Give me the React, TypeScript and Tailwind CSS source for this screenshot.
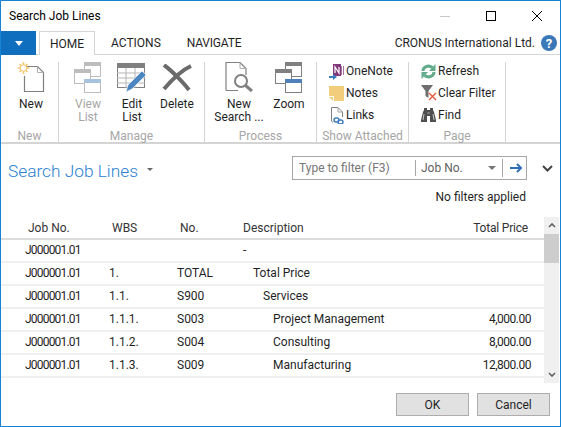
import type { ReactNode } from "react"

const rows = [
  { job: "J000001.01", wbs: "", no: "", desc: "-", indent: "pl-0", price: "" },
  { job: "J000001.01", wbs: "1.", no: "TOTAL", desc: "Total Price", indent: "pl-[10px]", price: "" },
  { job: "J000001.01", wbs: "1.1.", no: "S900", desc: "Services", indent: "pl-[20px]", price: "" },
  { job: "J000001.01", wbs: "1.1.1.", no: "S003", desc: "Project Management", indent: "pl-[30px]", price: "4,000.00" },
  { job: "J000001.01", wbs: "1.1.2.", no: "S004", desc: "Consulting", indent: "pl-[30px]", price: "8,000.00" },
  { job: "J000001.01", wbs: "1.1.3.", no: "S009", desc: "Manufacturing", indent: "pl-[30px]", price: "12,800.00" },
]

function NewIcon() {
  return (
    <svg width="28" height="31" viewBox="0 0 28 31" fill="none">
      <path d="M7.5 4.5H20.5L26.5 10.5V29.5H7.5V14" stroke="#808080" strokeWidth="1.2" />
      <path d="M20.5 4.5V10.5H26.5" stroke="#b0b0b0" />
      <g stroke="#f5c66e" strokeWidth="1.6">
        <path d="M6.5 0V12M0.5 6H12.5M2.5 2L10.5 10M10.5 2L2.5 10" />
      </g>
      <circle cx="6.5" cy="6" r="3.2" fill="#fff" stroke="#f5c66e" />
    </svg>
  )
}

function WindowsIcon({ top, front }: { top: string; front: string }) {
  return (
    <svg width="28" height="31" viewBox="0 0 28 31" fill="none">
      <rect x="10.5" y="0.5" width="16" height="14" fill="#fff" stroke={top} />
      <rect x="10" y="0" width="17" height="4" fill={top} />
      <rect x="0.5" y="7.5" width="16" height="14" fill="#fff" stroke={top} />
      <rect x="0" y="7" width="17" height="4" fill={top} />
      <rect x="10.5" y="17.5" width="16" height="13" fill="#fff" stroke={top} />
      <rect x="10" y="17" width="17" height="4" fill={front} />
    </svg>
  )
}

function EditIcon() {
  return (
    <svg width="30" height="30" viewBox="0 0 30 30" fill="none">
      <rect x="0.5" y="0.5" width="27" height="24" fill="#fff" stroke="#7f7f7f" />
      <rect x="0" y="0" width="28" height="5" fill="#7f7f7f" />
      <path d="M0 10H28M0 15H28M0 20H28M9 5V25M18 5V25" stroke="#b5b5b5" />
      <path d="M9 29L11 22L25 8L29 12L15 26Z" fill="#4b85c2" stroke="#fff" strokeWidth="0.6" />
    </svg>
  )
}

function DeleteIcon() {
  return (
    <svg width="30" height="27" viewBox="0 0 30 27" fill="none">
      <path d="M2 1C9 6 21 18 27 26" stroke="#6b6b6b" strokeWidth="4" />
      <path d="M29 2C20 6 8 18 2 25" stroke="#6b6b6b" strokeWidth="4" />
    </svg>
  )
}

function SearchPageIcon() {
  return (
    <svg width="28" height="31" viewBox="0 0 28 31" fill="none">
      <path d="M1 28.5V0.5H15L21 6.5V13M1 28.5H13" stroke="#808080" strokeWidth="1.2" />
      <path d="M15 0.5V6.5H21" stroke="#b0b0b0" />
      <circle cx="16" cy="19" r="6" fill="#fff" stroke="#808080" strokeWidth="2" />
      <path d="M20.5 23.5L27 29" stroke="#808080" strokeWidth="3" />
    </svg>
  )
}

function OneNoteIcon() {
  return (
    <svg width="16" height="17" viewBox="0 0 16 17" fill="none">
      <rect x="4" y="1" width="8" height="12" fill="#80397b" />
      <path d="M12.5 3V12M14.5 3V12" stroke="#a874a4" />
      <path d="M6 10V4L10 10V4" stroke="#fff" strokeWidth="1.2" />
      <path d="M0 13H4V11L8 14L4 17V15H0Z" fill="#3e7bbf" />
    </svg>
  )
}

function NotesIcon() {
  return (
    <svg width="15" height="15" viewBox="0 0 15 15">
      <path d="M0 0H15V15H5V10H0Z" fill="#f2cd7c" />
      <path d="M0 11H4V15Z" fill="#f2cd7c" />
    </svg>
  )
}

function LinksIcon() {
  return (
    <svg width="14" height="17" viewBox="0 0 14 17" fill="none">
      <path d="M1.5 14.5V0.5H8L12.5 5V10M3 15H2" stroke="#808080" />
      <path d="M8 0.5V5H12.5" stroke="#a0a0a0" />
      <rect x="4" y="11" width="5" height="4" rx="2" stroke="#3e7bbf" strokeWidth="1.4" />
      <rect x="8" y="13" width="5" height="4" rx="2" stroke="#3e7bbf" strokeWidth="1.4" />
    </svg>
  )
}

function RefreshIcon() {
  return (
    <svg width="15" height="15" viewBox="0 0 15 15" fill="none">
      <path d="M2 7C2 3 7 0.5 11.5 3.5" stroke="#62ab8c" strokeWidth="3" />
      <path d="M14.5 0V7H8Z" fill="#62ab8c" />
      <path d="M13 8C13 12 8 14.5 3.5 11.5" stroke="#62ab8c" strokeWidth="3" />
      <path d="M0.5 15V8H7Z" fill="#62ab8c" />
    </svg>
  )
}

function ClearFilterIcon() {
  return (
    <svg width="16" height="16" viewBox="0 0 16 16" fill="none">
      <path d="M0 0H12L7.5 6V13L4.5 11V6Z" fill="#6e6e6e" />
      <path d="M8 8L15 15M15 8L8 15" stroke="#e4583e" strokeWidth="1.4" />
    </svg>
  )
}

function FindIcon() {
  return (
    <svg width="15" height="14" viewBox="0 0 15 14">
      <path d="M3 0H6V2H9V0H12V2L13 4L15 12V14H9V8H6V14H0V12L2 4L3 2Z" fill="#4f4f4f" />
      <path d="M3 6L2 12M12 6L13 12" stroke="#c8c8c8" />
      <rect x="6.5" y="4" width="2" height="2" fill="#8a8a8a" />
    </svg>
  )
}

function BigButton({ label, second, icon, width, disabled }: { label: string; second?: string; icon: ReactNode; width: string; disabled?: boolean }) {
  return (
    <div className={`${width} flex flex-col items-center ${disabled ? "text-[#a6a6a6]" : "text-[#1f1f1f]"}`}>
      <div className="h-[31px] flex items-center justify-center">{icon}</div>
      <div className="mt-[5px] leading-[13px] text-center whitespace-nowrap">
        {label}
        {second && <br />}
        {second}
      </div>
    </div>
  )
}

function Group({ label, width, pad, children }: { label: string; width: string; pad: string; children: ReactNode }) {
  return (
    <div className={`${width} flex flex-col border-r border-[#d4d4d4] h-[81px] mt-[7px]`}>
      <div className={`flex flex-1 ${pad}`}>{children}</div>
      <div className="text-center text-[#a6a6a6] leading-[14px]">{label}</div>
    </div>
  )
}

function SmallButton({ icon, label }: { icon: ReactNode; label: string }) {
  return (
    <div className="h-[22px] flex items-center">
      <div className="w-[19px] flex justify-center shrink-0">{icon}</div>
      <span className="text-[#1f1f1f] whitespace-nowrap">{label}</span>
    </div>
  )
}

export default function App() {
  return (
    <div className="w-[561px] h-[427px] bg-white border border-[#1783d4] flex flex-col overflow-hidden text-[12px] text-[#1f1f1f] font-['Roboto',sans-serif]">
      {/* title bar */}
      <div className="h-[30px] flex items-center justify-between pl-[8px] shrink-0">
        <span className="text-black">Search Job Lines</span>
        <div className="flex items-center">
          <div className="w-[46px] flex justify-center"><div className="w-[10px] h-px bg-[#c8c8c8]" /></div>
          <div className="w-[46px] flex justify-center"><div className="w-[10px] h-[10px] border border-black" /></div>
          <div className="w-[46px] flex justify-center">
            <svg width="10" height="10" viewBox="0 0 10 10"><path d="M0 0L10 10M10 0L0 10" stroke="#000" /></svg>
          </div>
        </div>
      </div>

      {/* tabs */}
      <div className="h-[24px] flex items-stretch shrink-0 relative">
        <div className="w-[35px] bg-[#106ebe] flex items-center justify-center">
          <svg width="8" height="5" viewBox="0 0 8 5"><path d="M0 0H8L4 5Z" fill="#fff" /></svg>
        </div>
        <div className="ml-[3px] w-[56px] border border-b-0 border-[#d4d4d4] bg-white flex items-center justify-center z-10 h-[24px]">HOME</div>
        <div className="ml-[16px] flex items-center">ACTIONS</div>
        <div className="ml-[26px] flex items-center tracking-[-0.2px]">NAVIGATE</div>
        <div className="ml-auto flex items-center pr-[3px]">
          <span>CRONUS International Ltd.</span>
          <div className="ml-[6px] w-[16px] h-[16px] rounded-full bg-[#3a78b8] flex items-center justify-center text-white font-bold text-[13px] leading-none">?</div>
        </div>
      </div>

      {/* ribbon */}
      <div className="h-[90px] -mt-px border-t border-b-2 border-[#d4d4d4] flex shrink-0">
        <Group label="New" width="w-[58px]" pad="pl-[8px]">
          <BigButton label="New" width="w-[44px]" icon={<NewIcon />} />
        </Group>
        <Group label="Manage" width="w-[146px]" pad="pl-[7px]">
          <BigButton label="View" second="List" width="w-[44px]" disabled icon={<WindowsIcon top="#bdbdbd" front="#a7c2dc" />} />
          <BigButton label="Edit" second="List" width="w-[44px]" icon={<EditIcon />} />
          <BigButton label="Delete" width="w-[46px]" icon={<DeleteIcon />} />
        </Group>
        <Group label="Process" width="w-[112px]" pad="pl-[6px]">
          <BigButton label="New" second="Search ..." width="w-[56px]" icon={<SearchPageIcon />} />
          <BigButton label="Zoom" width="w-[44px]" icon={<WindowsIcon top="#808080" front="#4f81b8" />} />
        </Group>
        <Group label="Show Attached" width="w-[92px]" pad="pl-[10px]">
          <div className="flex flex-col -mt-[2px]">
            <SmallButton icon={<OneNoteIcon />} label="OneNote" />
            <SmallButton icon={<NotesIcon />} label="Notes" />
            <SmallButton icon={<LinksIcon />} label="Links" />
          </div>
        </Group>
        <Group label="Page" width="w-[97px]" pad="pl-[10px]">
          <div className="flex flex-col -mt-[2px]">
            <SmallButton icon={<RefreshIcon />} label="Refresh" />
            <SmallButton icon={<ClearFilterIcon />} label="Clear Filter" />
            <SmallButton icon={<FindIcon />} label="Find" />
          </div>
        </Group>
      </div>

      {/* page header */}
      <div className="flex justify-between pl-[7px] pt-[12px] shrink-0 h-[73px]">
        <div className="flex items-start">
          <span className="text-[17.3px] leading-[26px] font-light text-[#2a7fd3] mt-[2px]">Search Job Lines</span>
          <svg className="ml-[9px] mt-[12px]" width="6" height="3" viewBox="0 0 6 3"><path d="M0 0H6L3 3Z" fill="#666" /></svg>
        </div>
        <div className="flex flex-col items-end">
          <div className="flex items-start">
            <div className="w-[235px] h-[24px] border border-[#a6a6a6] flex items-center text-[#5f5f5f]">
              <span className="w-[122px] shrink-0 pl-[6px] text-[#767676]">Type to filter (F3)</span>
              <div className="w-px h-[16px] bg-[#a6a6a6] shrink-0" />
              <span className="pl-[5px] w-[72px] shrink-0">Job No.</span>
              <svg className="shrink-0" width="8" height="4" viewBox="0 0 8 4"><path d="M0 0H8L4 4Z" fill="#777" /></svg>
              <div className="w-px h-[18px] bg-[#a6a6a6] ml-[6px] shrink-0" />
              <svg className="ml-[7px] shrink-0" width="13" height="10" viewBox="0 0 13 10" fill="none"><path d="M0 5H11M7 1L11 5L7 9" stroke="#2f6fb5" strokeWidth="2" /></svg>
            </div>
            <svg className="ml-[15px] mr-[7px] mt-[9px]" width="11" height="7" viewBox="0 0 11 7" fill="none"><path d="M1 1L5.5 5.5L10 1" stroke="#444" strokeWidth="2" /></svg>
          </div>
          <span className="mt-[8px] mr-[34px] text-[#1f1f1f]">No filters applied</span>
        </div>
      </div>

      {/* table */}
      <div className="flex h-[166px] shrink-0">
        <div className="w-[543px]">
          <div className="h-[23px] grid grid-cols-[84px_68px_66px_1fr_auto] border-b-2 border-[#dcdcdc] items-center pl-[27px] pr-[16px] text-[#333]">
            <span>Job No.</span>
            <span>WBS</span>
            <span>No.</span>
            <span className="-ml-[3px]">Description</span>
            <span className="tracking-[-0.2px]">Total Price</span>
          </div>
          {rows.map((r, i) => (
            <div key={i} className="h-[23px] grid grid-cols-[84px_68px_66px_1fr_auto] border-b-2 border-[#f0f0f0] items-center pl-[24px] pr-[13px] pb-[1px]">
              <span className="tracking-[-0.8px]">{r.job}</span>
              <span>{r.wbs}</span>
              <span>{r.no}</span>
              <span className={r.indent}>{r.desc}</span>
              <span className="tracking-[-0.5px]">{r.price}</span>
            </div>
          ))}
        </div>
        <div className="w-[15px] bg-[#f0f0f0] flex flex-col">
          <div className="h-[17px] flex items-center justify-center">
            <svg width="8" height="5" viewBox="0 0 8 5" fill="none"><path d="M1 4L4 1L7 4" stroke="#606060" strokeWidth="1.6" /></svg>
          </div>
          <div className="h-[29px] bg-[#cdcdcd]" />
          <div className="mt-auto h-[17px] flex items-center justify-center">
            <svg width="8" height="5" viewBox="0 0 8 5" fill="none"><path d="M1 1L4 4L7 1" stroke="#606060" strokeWidth="1.6" /></svg>
          </div>
        </div>
      </div>

      {/* footer */}
      <div className="flex justify-end gap-[8px] pr-[10px] pt-[10px]">
        <div className="w-[73px] h-[23px] bg-[#e1e1e1] border border-[#adadad] flex items-center justify-center">OK</div>
        <div className="w-[73px] h-[23px] bg-[#e1e1e1] border border-[#adadad] flex items-center justify-center">Cancel</div>
      </div>
    </div>
  )
}
